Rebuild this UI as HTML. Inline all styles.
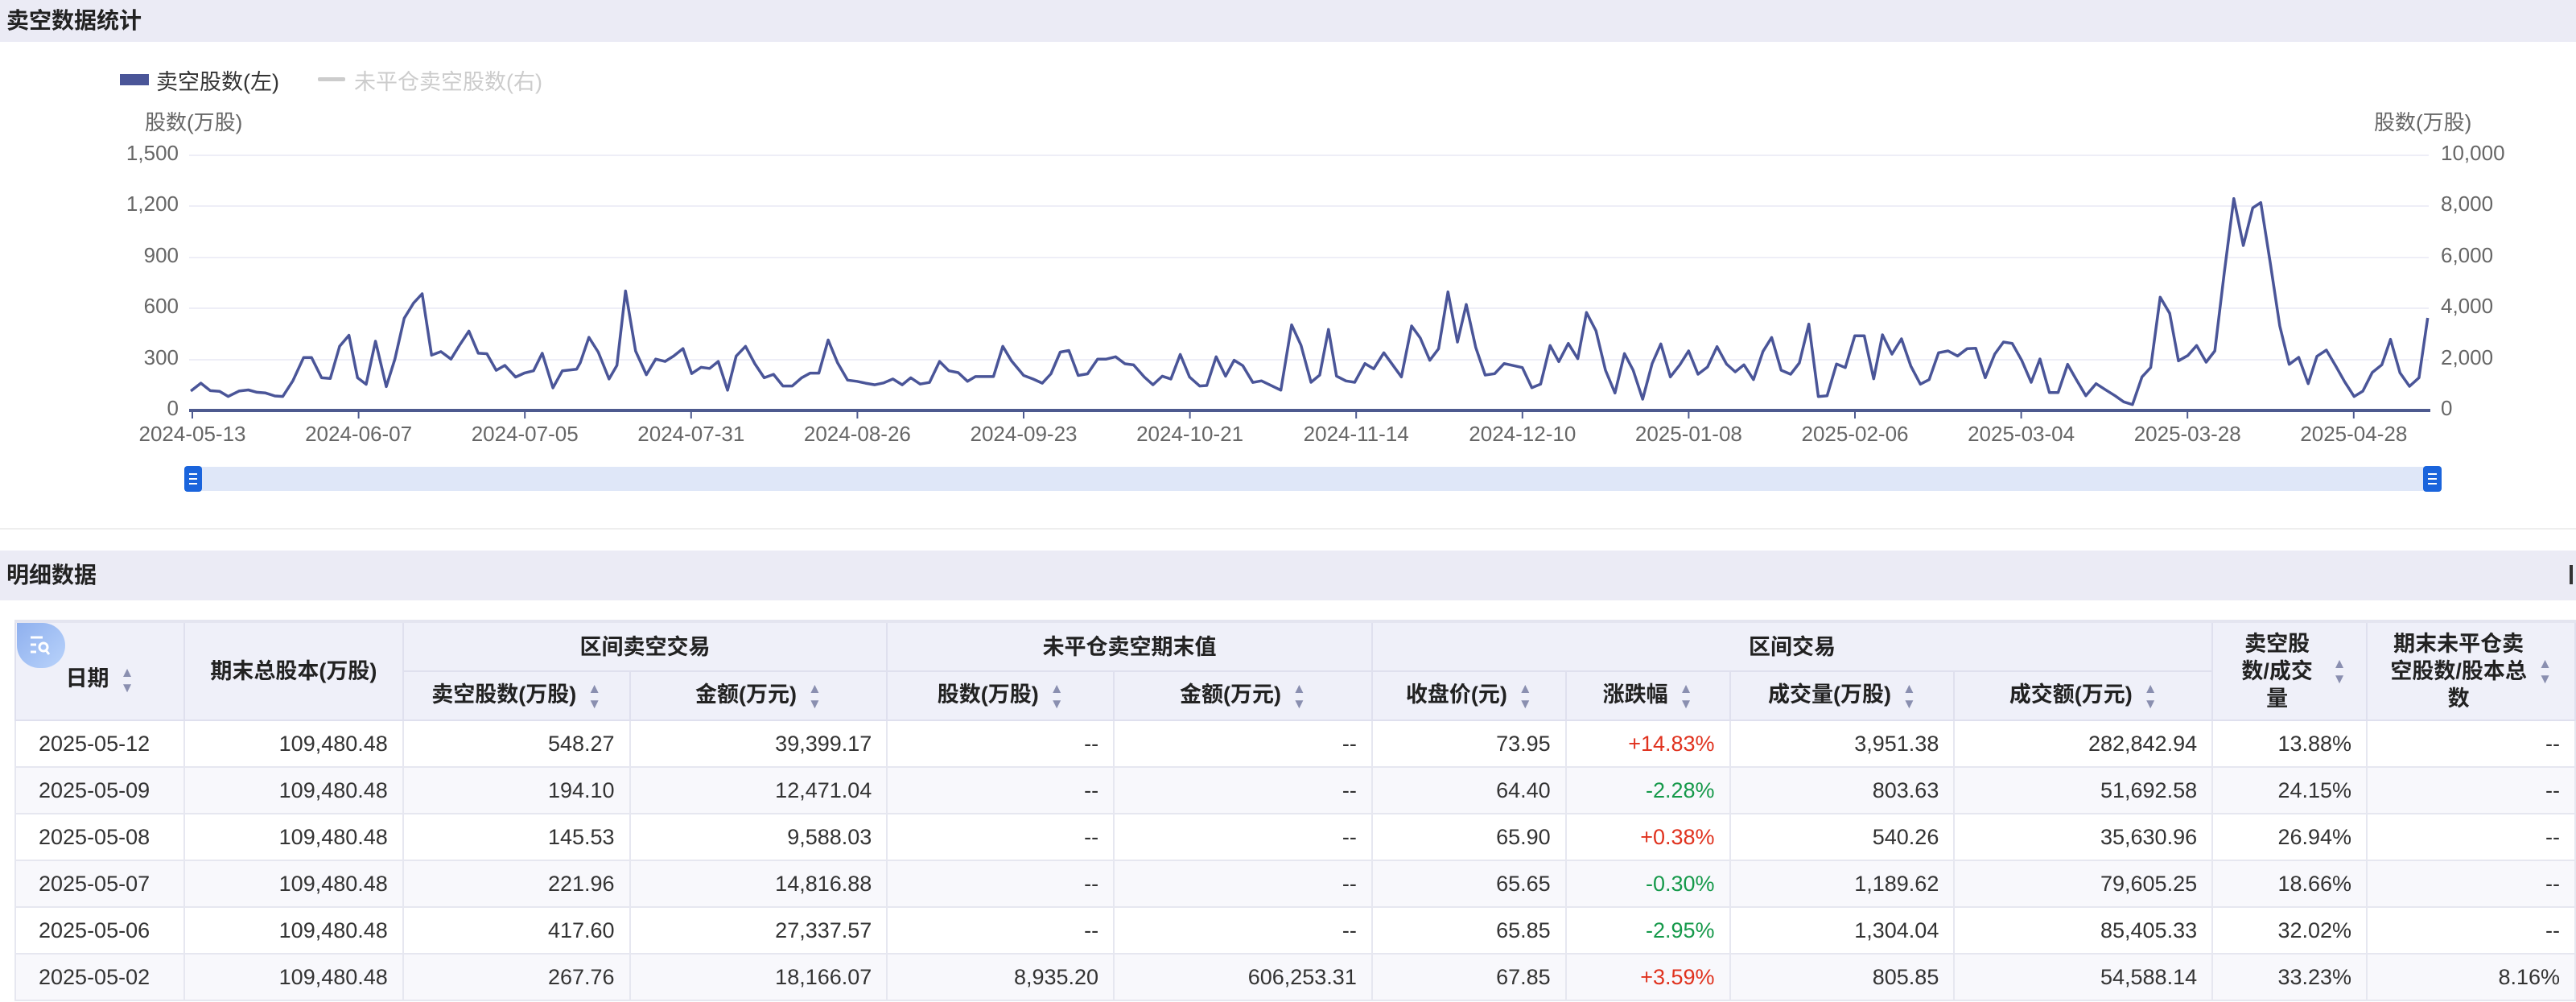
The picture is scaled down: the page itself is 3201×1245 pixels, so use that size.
<!DOCTYPE html>
<html><head><meta charset="utf-8">
<style>
*{margin:0;padding:0;box-sizing:border-box}
body{width:3201px;height:1245px;overflow:hidden;background:#fff;font-family:"Liberation Sans","Noto Sans CJK SC",sans-serif;position:relative;color:#333}
.bar{position:absolute;left:0;width:3201px;background:#ebebf5;font-weight:bold;font-size:28px;color:#222;padding-left:8px}
.t{position:absolute;font-size:26px;color:#666;white-space:nowrap}
table{position:absolute;left:18px;top:770px;border-collapse:collapse;table-layout:fixed;font-size:27px;border-top:4px solid #e4e5f0}
th{background:#eff0f9;border:2px solid #dfe0ee;font-weight:bold;color:#222;font-size:27px;line-height:34px}
td{border:2px solid #e6e7f0;height:58px;text-align:right;padding:0 18px;color:#333;white-space:nowrap}
tr.alt td{background:#f8f8fc}
td.d{text-align:left;padding-left:28px}
.s{display:inline-block;vertical-align:middle;margin-left:14px;font-size:17px;line-height:19px;color:#8a8fb0;text-align:center}
.up{color:#e0321e}.dn{color:#15994a}
</style></head><body>
<div class="bar" style="top:0;height:52px;line-height:52px">卖空数据统计</div>

<div style="position:absolute;left:149px;top:92px;width:36px;height:14px;background:#4a5598"></div>
<div class="t" style="left:194px;top:80px;color:#333;font-size:27px">卖空股数(左)</div>
<div style="position:absolute;left:395px;top:96px;width:34px;height:5px;background:#ccc;border-radius:2px"></div>
<div class="t" style="left:440px;top:80px;color:#ccc;font-size:27px">未平仓卖空股数(右)</div>
<div class="t" style="left:180px;top:132px">股数(万股)</div>
<div class="t" style="left:2950px;top:132px">股数(万股)</div>

<svg id="ch" width="3201" height="660" style="position:absolute;left:0;top:0">
<g stroke="#eeeef7" stroke-width="2">
<line x1="235" x2="3018" y1="193" y2="193"/><line x1="235" x2="3018" y1="256" y2="256"/><line x1="235" x2="3018" y1="320" y2="320"/><line x1="235" x2="3018" y1="383" y2="383"/><line x1="235" x2="3018" y1="447" y2="447"/>
</g>
<line x1="235" x2="3020" y1="510" y2="510" stroke="#4e5a8f" stroke-width="4"/>
<g id="ticks" stroke="#4e5a8f" stroke-width="2"></g>
<g font-family="Liberation Sans" font-size="26" fill="#666">
<text x="222" y="199" text-anchor="end">1,500</text><text x="222" y="262" text-anchor="end">1,200</text><text x="222" y="326" text-anchor="end">900</text><text x="222" y="389" text-anchor="end">600</text><text x="222" y="453" text-anchor="end">300</text><text x="222" y="516" text-anchor="end">0</text>
<text x="3033" y="199">10,000</text><text x="3033" y="262">8,000</text><text x="3033" y="326">6,000</text><text x="3033" y="389">4,000</text><text x="3033" y="453">2,000</text><text x="3033" y="516">0</text>
</g>
<g id="xl" font-family="Liberation Sans" font-size="26" fill="#666" text-anchor="middle"></g>
<path id="ln" fill="none" stroke="#4a5598" stroke-width="3.5" stroke-linejoin="round"/>
<rect x="239" y="580" width="2786" height="30" fill="#dfe7f8"/>
<rect x="229" y="579" width="22" height="32" rx="4" fill="#1a64dc"/>
<rect x="3011" y="579" width="23" height="32" rx="4" fill="#1a64dc"/>
<g stroke="#fff" stroke-width="2"><line x1="235" x2="245" y1="589" y2="589"/><line x1="235" x2="245" y1="595" y2="595"/><line x1="235" x2="245" y1="601" y2="601"/><line x1="3017" x2="3028" y1="589" y2="589"/><line x1="3017" x2="3028" y1="595" y2="595"/><line x1="3017" x2="3028" y1="601" y2="601"/></g>
<line x1="0" x2="3201" y1="657" y2="657" stroke="#eee" stroke-width="2"/>
</svg>

<div class="bar" style="top:684px;height:62px;line-height:62px">明细数据</div>
<div style="position:absolute;left:3193px;top:702px;width:4px;height:24px;background:#333"></div>

<table>
<colgroup><col style="width:210px"><col style="width:272px"><col style="width:282px"><col style="width:320px"><col style="width:282px"><col style="width:321px"><col style="width:241px"><col style="width:204px"><col style="width:279px"><col style="width:321px"><col style="width:192px"><col style="width:259px"></colgroup>
<tr style="height:62px">
<th rowspan="2" style="padding-top:22px">日期<span class="s">▲<br>▼</span></th>
<th rowspan="2">期末总股本(万股)</th>
<th colspan="2">区间卖空交易</th>
<th colspan="2">未平仓卖空期末值</th>
<th colspan="4">区间交易</th>
<th rowspan="2" style="padding:0 10px"><span style="display:inline-block;width:110px;vertical-align:middle">卖空股数/成交量</span><span class="s">▲<br>▼</span></th>
<th rowspan="2" style="padding:0 8px"><span style="display:inline-block;width:170px;vertical-align:middle">期末未平仓卖空股数/股本总数</span><span class="s">▲<br>▼</span></th>
</tr>
<tr style="height:61px">
<th>卖空股数(万股)<span class="s">▲<br>▼</span></th>
<th>金额(万元)<span class="s">▲<br>▼</span></th>
<th>股数(万股)<span class="s">▲<br>▼</span></th>
<th>金额(万元)<span class="s">▲<br>▼</span></th>
<th>收盘价(元)<span class="s">▲<br>▼</span></th>
<th>涨跌幅<span class="s">▲<br>▼</span></th>
<th>成交量(万股)<span class="s">▲<br>▼</span></th>
<th>成交额(万元)<span class="s">▲<br>▼</span></th>
</tr>
<tr><td class="d">2025-05-12</td><td>109,480.48</td><td>548.27</td><td>39,399.17</td><td>--</td><td>--</td><td>73.95</td><td class="up">+14.83%</td><td>3,951.38</td><td>282,842.94</td><td>13.88%</td><td>--</td></tr>
<tr class="alt"><td class="d">2025-05-09</td><td>109,480.48</td><td>194.10</td><td>12,471.04</td><td>--</td><td>--</td><td>64.40</td><td class="dn">-2.28%</td><td>803.63</td><td>51,692.58</td><td>24.15%</td><td>--</td></tr>
<tr><td class="d">2025-05-08</td><td>109,480.48</td><td>145.53</td><td>9,588.03</td><td>--</td><td>--</td><td>65.90</td><td class="up">+0.38%</td><td>540.26</td><td>35,630.96</td><td>26.94%</td><td>--</td></tr>
<tr class="alt"><td class="d">2025-05-07</td><td>109,480.48</td><td>221.96</td><td>14,816.88</td><td>--</td><td>--</td><td>65.65</td><td class="dn">-0.30%</td><td>1,189.62</td><td>79,605.25</td><td>18.66%</td><td>--</td></tr>
<tr><td class="d">2025-05-06</td><td>109,480.48</td><td>417.60</td><td>27,337.57</td><td>--</td><td>--</td><td>65.85</td><td class="dn">-2.95%</td><td>1,304.04</td><td>85,405.33</td><td>32.02%</td><td>--</td></tr>
<tr class="alt"><td class="d">2025-05-02</td><td>109,480.48</td><td>267.76</td><td>18,166.07</td><td>8,935.20</td><td>606,253.31</td><td>67.85</td><td class="up">+3.59%</td><td>805.85</td><td>54,588.14</td><td>33.23%</td><td>8.16%</td></tr>
</table>

<div style="position:absolute;left:21px;top:774px;width:60px;height:56px;border-radius:0 30px 30px 30px;background:linear-gradient(135deg,#8fb0ee,#b9d3fb)"></div>
<svg width="60" height="56" style="position:absolute;left:21px;top:774px">
<g stroke="#fff" stroke-width="3"><line x1="17" x2="32" y1="18" y2="18"/><line x1="17" x2="24" y1="27" y2="27"/><line x1="17" x2="24" y1="36" y2="36"/></g>
<circle cx="33" cy="30" r="5" fill="none" stroke="#fff" stroke-width="3"/><line x1="36" y1="34" x2="40" y2="39" stroke="#fff" stroke-width="3"/>
</svg>

<script>
var a=[8,522,22,488,35,520,48,523,60,545,75,522,88,517,100,527,112,530,125,543,136,545,150,478,165,378,176,378,190,465,202,468,215,330,228,283,240,465,252,493,265,308,280,503,292,385,305,210,318,145,330,105,343,368,356,353,370,385,382,325,395,265,408,360,420,362,433,433,445,412,460,462,472,445,485,435,497,360,512,508,525,435,545,428,550,400,562,292,575,355,590,470,601,412,613,93,627,350,642,452,655,385,668,395,680,372,693,340,705,447,718,420,730,425,742,395,755,518,767,372,780,330,793,405,806,465,819,450,832,500,845,500,858,465,870,445,882,445,895,303,908,400,922,475,935,480,947,488,960,495,972,487,985,470,998,495,1010,465,1023,492,1036,485,1050,395,1063,435,1076,443,1089,480,1100,460,1112,460,1125,460,1138,330,1150,392,1167,455,1180,470,1193,488,1205,448,1218,355,1230,348,1243,455,1256,448,1270,385,1282,385,1295,375,1308,405,1320,410,1335,462,1347,495,1360,458,1372,470,1385,365,1398,462,1412,500,1422,498,1435,375,1448,458,1460,390,1472,413,1486,485,1498,478,1525,518,1540,238,1553,325];
var b=[10,765,22,738,34,568,45,742,58,760,70,765,84,695,96,715,110,655,122,700,134,745,148,555,160,600,173,683,185,640,198,428,211,615,223,475,236,635,249,738,262,733,275,695,288,703,300,710,313,785,325,772,338,628,350,688,363,620,376,677,388,505,401,573,414,720,427,805,440,658,452,720,465,828,478,695,490,622,503,745,516,700,528,648,541,735,554,708,567,632,580,697,592,726,604,700,617,755,630,650,642,598,655,720,668,735,680,693,693,548,706,818,718,815,731,697,743,710,756,592,769,592,782,752,794,588,807,660,820,603,833,705,846,772,858,755,871,655,884,648,897,667,910,640,922,638,935,748,948,660,960,615,972,620,985,683,998,765,1010,678,1023,803,1035,803,1048,698,1060,755,1073,815,1087,770,1100,793,1113,815,1125,838,1137,848,1150,745,1162,710,1175,448,1188,508,1200,685,1213,665,1225,628,1238,690,1250,648,1263,355,1276,80,1289,255,1302,115,1313,95,1326,320,1339,555,1352,698,1365,672,1378,770,1390,668,1403,645,1416,705,1428,763,1441,818,1453,798,1466,728,1479,700,1491,605,1504,730,1517,780,1530,748,1542,525];
var p=[];
for(var i=0;i<a.length;i+=2)p.push((230+a[i]/1.12).toFixed(1)+','+(365+(a[i+1]-105)*0.29).toFixed(1));
for(var i=0;i<b.length;i+=2)p.push((1620+b[i]/1.104).toFixed(1)+','+(220+b[i+1]/3).toFixed(1));
document.getElementById('ln').setAttribute('d','M'+p.join('L'));
var L=['2024-05-13','2024-06-07','2024-07-05','2024-07-31','2024-08-26','2024-09-23','2024-10-21','2024-11-14','2024-12-10','2025-01-08','2025-02-06','2025-03-04','2025-03-28','2025-04-28'];
var ns='http://www.w3.org/2000/svg',g=document.getElementById('xl'),tk=document.getElementById('ticks');
for(var k=0;k<14;k++){var x=239+k*206.6;var t=document.createElementNS(ns,'text');t.setAttribute('x',x);t.setAttribute('y',548);t.textContent=L[k];g.appendChild(t);
var l=document.createElementNS(ns,'line');l.setAttribute('x1',x);l.setAttribute('x2',x);l.setAttribute('y1',510);l.setAttribute('y2',520);tk.appendChild(l);}
</script>
</body></html>
